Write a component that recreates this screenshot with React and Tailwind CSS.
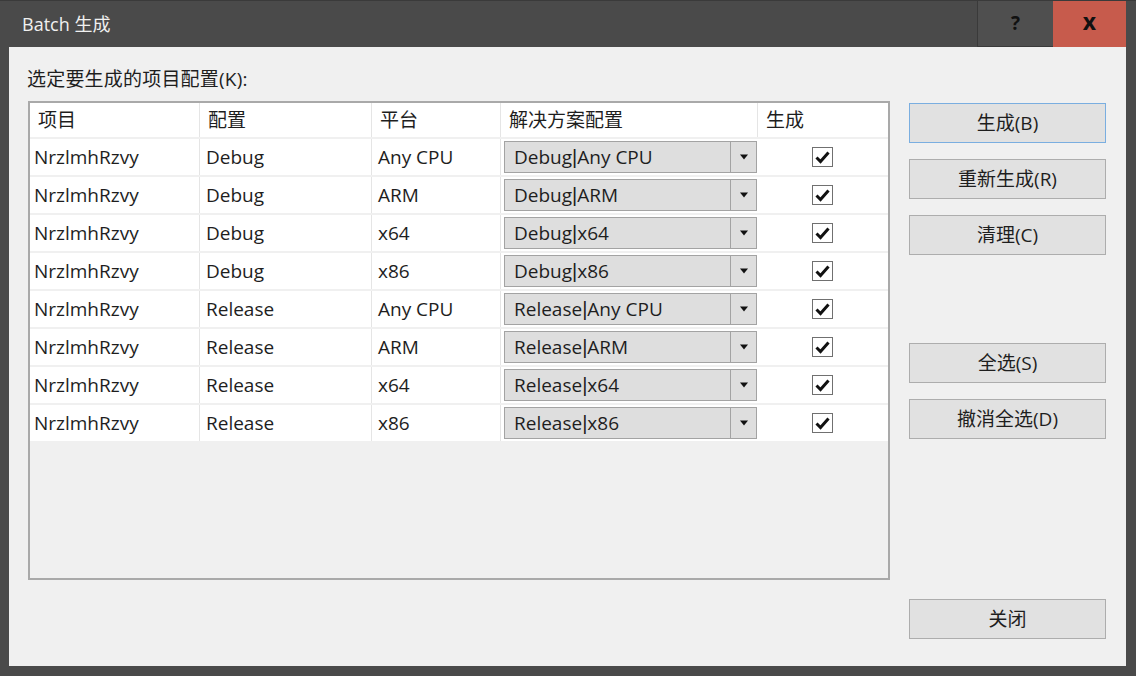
import React from "react";

const rows = [
  ["Debug", "Any CPU"],
  ["Debug", "ARM"],
  ["Debug", "x64"],
  ["Debug", "x86"],
  ["Release", "Any CPU"],
  ["Release", "ARM"],
  ["Release", "x64"],
  ["Release", "x86"],
];

const FONT = { fontFamily: "'Segoe UI', 'Open Sans', 'Noto Sans CJK SC', sans-serif" };

function Check() {
  return (
    <div className="w-[21px] h-[20px] border border-[#707070] bg-white flex items-center justify-center">
      <svg width="15" height="13" viewBox="0 0 15 13">
        <path d="M1.5 6.5 L5.5 10.5 L13.5 1.5" fill="none" stroke="#111" strokeWidth="3" strokeLinejoin="miter" />
      </svg>
    </div>
  );
}

function Combo({ cfg, plat }) {
  return (
    <div className="ml-[3px] mr-[1px] h-[32px] w-full flex border border-[#a3a3a3] bg-[#dedede]">
      <div className="flex-1 flex items-center pl-[9px] text-[19px] text-[#1e1e1e] whitespace-nowrap">
        {cfg}
        <span className="font-['Liberation_Sans'] text-[20px]">|</span>
        {plat}
      </div>
      <div className="w-[26px] border-l border-[#a3a3a3] flex items-center justify-center">
        <svg width="10" height="6" viewBox="0 0 10 6">
          <path d="M1 0.5 L9 0.5 L5 5.5 Z" fill="#111" />
        </svg>
      </div>
    </div>
  );
}

function Btn({ children, className = "", primary = false }) {
  return (
    <div
      className={
        "h-[40px] w-[197px] flex items-center justify-center text-[19px] text-[#1e1e1e] bg-[#e1e1e1] border " +
        (primary ? "border-[#7aaee0] " : "border-[#adadad] ") +
        className
      }
    >
      {children}
    </div>
  );
}

const cols = "grid grid-cols-[170px_172px_129px_257px_130px]";

export default function App() {
  return (
    <div style={FONT} className="w-[1136px] h-[676px] bg-[#4a4a4a] flex flex-col overflow-hidden">
      {/* title bar */}
      <div className="h-[47px] flex items-stretch border-t border-[#3a3a3a]">
        <div className="flex-1 flex items-center pl-[22px] text-[18px] text-[#f0f0f0]">Batch 生成</div>
        <div className="w-[76px] bg-[#4f4f4f] border-l border-b border-[#3a3a3a] flex items-center justify-center text-[19px] font-bold text-[#111]">?</div>
        <div className="w-[73px] bg-[#c75b4c] flex items-center justify-center text-[23px] font-bold text-[#111] leading-none pb-[6px]">x</div>
        <div className="w-[10px]" />
      </div>
      {/* content */}
      <div className="ml-[9px] mr-[10px] h-[619px] bg-[#f0f0f0] flex">
        <div className="pl-[18px] flex flex-col">
          <div className="mt-[20px] h-[24px] flex items-center text-[19px] text-[#1e1e1e] tracking-[0.2px]">选定要生成的项目配置(K):</div>
          <div className="mt-[10px] ml-[1px] w-[862px] h-[479px] border-2 border-[#a9a9a9] bg-[#f0f0f0] flex flex-col text-[19px] text-[#1e1e1e]">
            <div className={cols + " h-[34px] bg-white"}>
              {["项目", "配置", "平台", "解决方案配置", "生成"].map((h, i) => (
                <div key={i} className={"flex items-center pl-[8px] " + (i < 4 ? "border-r border-[#e5e5e5]" : "")}>
                  {h}
                </div>
              ))}
            </div>
            {rows.map(([cfg, plat], r) => (
              <div key={r} className={cols + " h-[36px] mt-[2px] bg-white"}>
                <div className="flex items-center pl-[4px] border-r border-[#e5e5e5]">NrzlmhRzvy</div>
                <div className="flex items-center pl-[6px] border-r border-[#e5e5e5]">{cfg}</div>
                <div className="flex items-center pl-[6px] border-r border-[#e5e5e5]">{plat}</div>
                <div className="flex items-center">
                  <Combo cfg={cfg} plat={plat} />
                </div>
                <div className="flex items-center justify-center pr-[1px]">
                  <Check />
                </div>
              </div>
            ))}
          </div>
        </div>
        <div className="ml-[19px] pt-[56px] flex flex-col">
          <Btn primary>生成(B)</Btn>
          <Btn className="mt-[16px]">重新生成(R)</Btn>
          <Btn className="mt-[16px]">清理(C)</Btn>
          <Btn className="mt-[88px]">全选(S)</Btn>
          <Btn className="mt-[16px]">撤消全选(D)</Btn>
          <Btn className="mt-[160px]">关闭</Btn>
        </div>
      </div>
    </div>
  );
}
